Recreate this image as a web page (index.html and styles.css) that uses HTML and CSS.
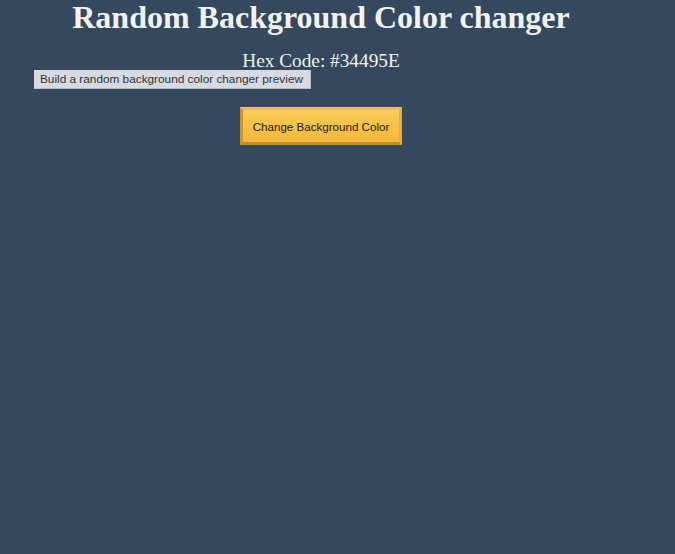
FILE: index.html
```html
<!DOCTYPE html>
<html>
<head>
<meta charset="utf-8">
<title>Random Background Color changer</title>
<link rel="stylesheet" href="styles.css">
</head>
<body>
<main class="page">
  <h1 class="title">Random Background Color changer</h1>
  <h2 class="hex">Hex Code: #34495E</h2>
  <button class="change-btn" type="button">Change Background Color</button>
</main>
<div class="tooltip">Build a random background color changer preview</div>
</body>
</html>
```

FILE: styles.css
```css
html, body {
  margin: 0;
  padding: 0;
  background: #34495e;
  height: 100%;
}
body {
  position: relative;
  font-family: "Liberation Serif", "Times New Roman", serif;
  color: #f2f2f2;
}
.page {
  width: 642px;
  display: flex;
  flex-direction: column;
  align-items: center;
  text-align: center;
}
.title {
  margin: 0;
  font-size: 32px;
  line-height: 34px;
  font-weight: bold;
}
.hex {
  margin: 15px 0 0;
  font-size: 19.3px;
  line-height: 24px;
  font-weight: normal;
}
.change-btn {
  margin-top: 34px;
  width: 162px;
  height: 38px;
  padding: 0;
  font-family: "Liberation Sans", Arial, sans-serif;
  font-size: 11.6px;
  color: #1e1a10;
  background: linear-gradient(#fbcc55, #f6b73c);
  border: 3px solid;
  border-color: #f5c04a #e9ae3a #c38b2b #c99232;
  cursor: pointer;
}
.tooltip {
  position: absolute;
  left: 34px;
  top: 70px;
  width: 270px;
  height: 18px;
  box-sizing: content-box;
  padding: 0 0 0 6px;
  background: #d7dbe1;
  border: 1px solid #b8bec7;
  border-left: 0;
  border-top: 0;
  color: #2f3338;
  font-family: "Liberation Sans", Arial, sans-serif;
  font-size: 11.8px;
  line-height: 18px;
  text-align: left;
}
```
